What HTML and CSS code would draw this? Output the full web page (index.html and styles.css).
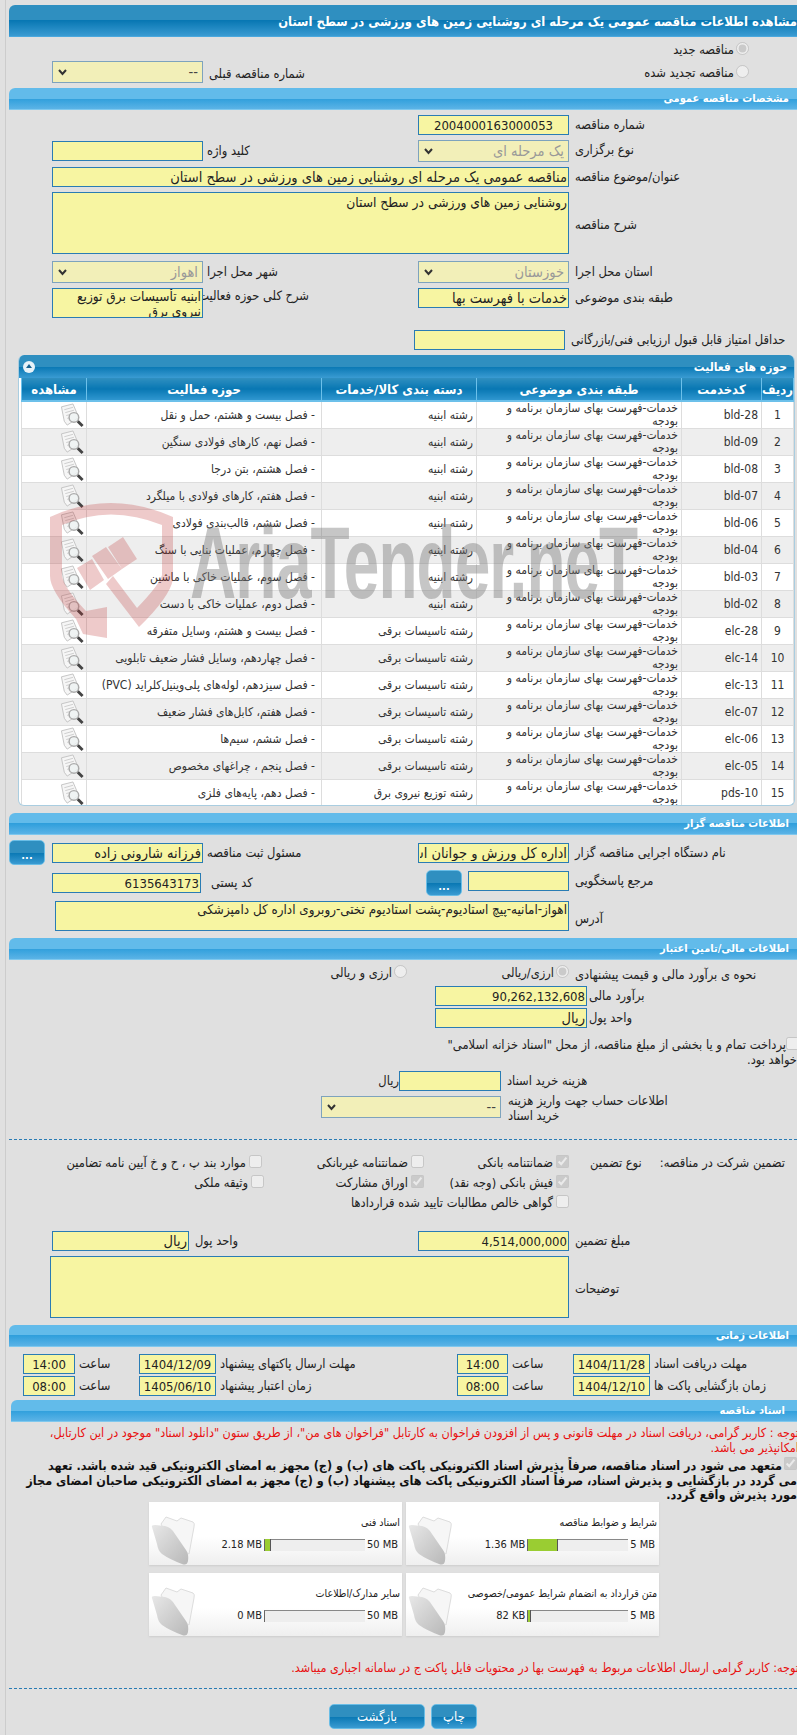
FILE: index.html
```html
<!DOCTYPE HTML>
<html lang="fa" dir="rtl">
<head>
<meta charset="UTF-8">
<title>مشاهده اطلاعات مناقصه</title>
<link rel="stylesheet" href="styles.css">
</head>
<body>
<svg class="defs" width="0" height="0">
  <defs>
    <linearGradient id="gFolder" x1="0" y1="0" x2="1" y2="1">
      <stop offset="0" stop-color="#e8e8e8"/>
      <stop offset="1" stop-color="#b8b8b8"/>
    </linearGradient>
    <symbol id="icoView" viewBox="0 0 26 26">
      <path d="M2 4 L14 1 L20 15 L8 23 L5 19 Z" fill="#f6f6f6" stroke="#c4c4c4"/>
      <path d="M5 7 L14 4.500 M6 10 L15 7.500 M7 13 L11 12 M8 16 L10 15.500" stroke="#ccc" fill="none"/>
      <circle cx="15" cy="15" r="5" fill="#eef2f2" fill-opacity=".8" stroke="#aaa" stroke-width="1.500"/>
      <path d="M19 19 L24 24" stroke="#444" stroke-width="3"/>
    </symbol>
    <symbol id="icoFolder" viewBox="0 0 44 52">
      <path d="M10 10 L15 3 L26 7 L30 4 L42 8 Q44 9 43 13 L38 40 L20 30 Z" fill="#f6f6f6" stroke="#ddd"/>
      <path d="M1 13 Q0 11 4 11 L14 12 Q20 13 24 20 L35 36 Q38 40 37 47 Q36 52 31 50 Q18 45 11 40 Q7 37 6 30 Z" fill="url(#gFolder)"/>
    </symbol>
  </defs>
</svg>

<div class="page">
  <div class="bar-main">مشاهده اطلاعات مناقصه عمومی یک مرحله ای روشنایی زمین های ورزشی در سطح استان</div>

  <div class="row h19 mt5">
    <label class="opt-right w228"><input type="radio" disabled checked><span>مناقصه جدید</span></label>
  </div>
  <div class="row h27">
    <label class="opt-right opt-second w228"><input type="radio" disabled><span>مناقصه تجدید شده</span></label>
    <div class="ctl w260"></div>
    <div class="lbl prev-lbl">شماره مناقصه قبلی</div>
    <select class="sel w151 sel-on"><option>--</option></select>
  </div>

  <div class="bar-sec">مشخصات مناقصه عمومی</div>

  <div class="row h25 mt5">
    <div class="lbl w228">شماره مناقصه</div>
    <input class="fld w151 center" type="text" value="2004000163000053">
  </div>
  <div class="row h27">
    <div class="lbl w228">نوع برگزاری</div>
    <div class="ctl w260"><select class="sel w151" disabled><option>یک مرحله ای</option></select></div>
    <div class="lbl w106 mt1">کلید واژه</div>
    <input class="fld w151 mt1" type="text">
  </div>
  <div class="row h25">
    <div class="lbl w228">عنوان/موضوع مناقصه</div>
    <input class="fld fa w517" type="text" value="مناقصه عمومی یک مرحله ای روشنایی زمین های ورزشی در سطح استان">
  </div>
  <div class="row h69">
    <div class="lbl w228 lbl-mid">شرح مناقصه</div>
    <textarea class="fld ta-big w517 ta62">روشنایی زمین های ورزشی در سطح استان</textarea>
  </div>
  <div class="row h27">
    <div class="lbl w228 mt1">استان محل اجرا</div>
    <div class="ctl w260"><select class="sel w151" disabled><option>خوزستان</option></select></div>
    <div class="lbl w106 mt1">شهر محل اجرا</div>
    <select class="sel w151" disabled><option>اهواز</option></select>
  </div>
  <div class="row h42">
    <div class="lbl w228">طبقه بندی موضوعی</div>
    <div class="ctl w260"><input class="fld fa w151" type="text" value="خدمات با فهرست بها"></div>
    <div class="lbl w106 lbl-top">شرح کلی حوزه فعالیت</div>
    <textarea class="fld ta-small w151 ta30">ابنیه تأسیسات برق توزیع
نیروی برق</textarea>
  </div>
  <div class="row h25">
    <div class="lbl w232">حداقل امتیاز قابل قبول ارزیابی فنی/بازرگانی</div>
    <input class="fld w151" type="text">
  </div>

  <div class="panel">
    <div class="panel-head">
      <span>حوزه های فعالیت</span>
      <span class="collapse"></span>
    </div>
    <table class="grid">
      <thead>
        <tr><th class="c-no">ردیف</th><th class="c-code">کدخدمت</th><th class="c-cat">طبقه بندی موضوعی</th><th class="c-group">دسته بندی کالا/خدمات</th><th class="c-act">حوزه فعالیت</th><th class="c-view">مشاهده</th></tr>
      </thead>
      <tbody>
        <tr><td class="t-no">1</td><td class="t-code">bld-28</td><td>خدمات-فهرست بهای سازمان برنامه و بودجه</td><td>رشته ابنیه</td><td>- فصل بیست و هشتم، حمل و نقل</td><td class="t-view"><svg class="ico-view"><use href="#icoView"/></svg></td></tr>
        <tr><td class="t-no">2</td><td class="t-code">bld-09</td><td>خدمات-فهرست بهای سازمان برنامه و بودجه</td><td>رشته ابنیه</td><td>- فصل نهم، کارهای فولادی سنگین</td><td class="t-view"><svg class="ico-view"><use href="#icoView"/></svg></td></tr>
        <tr><td class="t-no">3</td><td class="t-code">bld-08</td><td>خدمات-فهرست بهای سازمان برنامه و بودجه</td><td>رشته ابنیه</td><td>- فصل هشتم، بتن درجا</td><td class="t-view"><svg class="ico-view"><use href="#icoView"/></svg></td></tr>
        <tr><td class="t-no">4</td><td class="t-code">bld-07</td><td>خدمات-فهرست بهای سازمان برنامه و بودجه</td><td>رشته ابنیه</td><td>- فصل هفتم، کارهای فولادی با میلگرد</td><td class="t-view"><svg class="ico-view"><use href="#icoView"/></svg></td></tr>
        <tr><td class="t-no">5</td><td class="t-code">bld-06</td><td>خدمات-فهرست بهای سازمان برنامه و بودجه</td><td>رشته ابنیه</td><td>- فصل ششم، قالب‌بندی فولادی</td><td class="t-view"><svg class="ico-view"><use href="#icoView"/></svg></td></tr>
        <tr><td class="t-no">6</td><td class="t-code">bld-04</td><td>خدمات-فهرست بهای سازمان برنامه و بودجه</td><td>رشته ابنیه</td><td>- فصل چهارم، عملیات بنایی با سنگ</td><td class="t-view"><svg class="ico-view"><use href="#icoView"/></svg></td></tr>
        <tr><td class="t-no">7</td><td class="t-code">bld-03</td><td>خدمات-فهرست بهای سازمان برنامه و بودجه</td><td>رشته ابنیه</td><td>- فصل سوم، عملیات خاکی با ماشین</td><td class="t-view"><svg class="ico-view"><use href="#icoView"/></svg></td></tr>
        <tr><td class="t-no">8</td><td class="t-code">bld-02</td><td>خدمات-فهرست بهای سازمان برنامه و بودجه</td><td>رشته ابنیه</td><td>- فصل دوم، عملیات خاکی با دست</td><td class="t-view"><svg class="ico-view"><use href="#icoView"/></svg></td></tr>
        <tr><td class="t-no">9</td><td class="t-code">elc-28</td><td>خدمات-فهرست بهای سازمان برنامه و بودجه</td><td>رشته تاسیسات برقی</td><td>- فصل بیست و هشتم، وسایل متفرقه</td><td class="t-view"><svg class="ico-view"><use href="#icoView"/></svg></td></tr>
        <tr><td class="t-no">10</td><td class="t-code">elc-14</td><td>خدمات-فهرست بهای سازمان برنامه و بودجه</td><td>رشته تاسیسات برقی</td><td>- فصل چهاردهم، وسایل فشار ضعیف تابلویی</td><td class="t-view"><svg class="ico-view"><use href="#icoView"/></svg></td></tr>
        <tr><td class="t-no">11</td><td class="t-code">elc-13</td><td>خدمات-فهرست بهای سازمان برنامه و بودجه</td><td>رشته تاسیسات برقی</td><td>- فصل سیزدهم، لوله‌های پلی‌وینیل‌کلراید (PVC)</td><td class="t-view"><svg class="ico-view"><use href="#icoView"/></svg></td></tr>
        <tr><td class="t-no">12</td><td class="t-code">elc-07</td><td>خدمات-فهرست بهای سازمان برنامه و بودجه</td><td>رشته تاسیسات برقی</td><td>- فصل هفتم، کابل‌های فشار ضعیف</td><td class="t-view"><svg class="ico-view"><use href="#icoView"/></svg></td></tr>
        <tr><td class="t-no">13</td><td class="t-code">elc-06</td><td>خدمات-فهرست بهای سازمان برنامه و بودجه</td><td>رشته تاسیسات برقی</td><td>- فصل ششم، سیم‌ها</td><td class="t-view"><svg class="ico-view"><use href="#icoView"/></svg></td></tr>
        <tr><td class="t-no">14</td><td class="t-code">elc-05</td><td>خدمات-فهرست بهای سازمان برنامه و بودجه</td><td>رشته تاسیسات برقی</td><td>- فصل پنجم ، چراغهای مخصوص</td><td class="t-view"><svg class="ico-view"><use href="#icoView"/></svg></td></tr>
        <tr><td class="t-no">15</td><td class="t-code">pds-10</td><td>خدمات-فهرست بهای سازمان برنامه و بودجه</td><td>رشته توزیع نیروی برق</td><td>- فصل دهم، پایه‌های فلزی</td><td class="t-view"><svg class="ico-view"><use href="#icoView"/></svg></td></tr>
      </tbody>
    </table>
  </div>

  <div class="bar-sec mt7">اطلاعات مناقصه گزار</div>

  <div class="row h30 mt5">
    <div class="lbl w228 mt3">نام دستگاه اجرایی مناقصه گزار</div>
    <div class="ctl w260 mt3"><input class="fld fa w151" type="text" value="اداره کل ورزش و جوانان استان خوزستان"></div>
    <div class="lbl w106 mt3">مسئول ثبت مناقصه</div>
    <input class="fld fa w151 mt3" type="text" value="فرزانه شارونی زاده">
    <button class="btn btn-more" type="button">...</button>
  </div>
  <div class="row h31">
    <div class="lbl w228 mt1">مرجع پاسخگویی</div>
    <input class="fld w101 mt1" type="text">
    <button class="btn btn-ref" type="button">...</button>
    <div class="lbl w225 mt3 postal">کد پستی</div>
    <input class="fld w149 mt3" type="text" value="6135643173">
  </div>
  <div class="row h37">
    <div class="lbl w228 lbl-addr">آدرس</div>
    <textarea class="fld ta-addr w514 ta30">اهواز-امانیه-پیچ استادیوم-پشت استادیوم تختی-روبروی اداره کل دامپزشکی</textarea>
  </div>

  <div class="bar-sec">اطلاعات مالی/تامین اعتبار</div>

  <div class="row h21 mt5">
    <div class="lbl w228 pr32">نحوه ی برآورد مالی و قیمت پیشنهادی</div>
    <label class="opt w162"><input type="radio" disabled checked><span>ارزی/ریالی</span></label>
    <label class="opt"><input type="radio" disabled><span>ارزی و ریالی</span></label>
  </div>
  <div class="row h22">
    <div class="lbl w210 pl2">برآورد مالی</div>
    <input class="fld w152" type="text" value="90,262,132,608">
  </div>
  <div class="row h27">
    <div class="lbl w210 pl2">واحد پول</div>
    <input class="fld fa w152" type="text" value="ریال">
  </div>
  <p class="treasury"><input type="checkbox" disabled>پرداخت تمام و یا بخشی از مبلغ مناقصه، از محل "اسناد خزانه اسلامی"<br>خواهد بود.</p>
  <div class="row h25 mt6">
    <div class="lbl w296">هزینه خرید اسناد</div>
    <input class="fld w102" type="text">
    <div class="lbl-unit">ریال</div>
  </div>
  <div class="row h31">
    <div class="lbl w296 lbl-wrap">اطلاعات حساب جهت واریز هزینه<br>خرید اسناد</div>
    <select class="sel w180 sel-on"><option>--</option></select>
  </div>
  <div class="dash"></div>

  <div class="row h20 mt15">
    <div class="g-title">تضمین شرکت در مناقصه:</div>
    <div class="g-type">نوع تضمین</div>
    <label class="chk w145"><input type="checkbox" disabled checked><span>ضمانتنامه بانکی</span></label>
    <label class="chk w162"><input type="checkbox" disabled><span>ضمانتنامه غیربانکی</span></label>
    <label class="chk"><input type="checkbox" disabled><span>موارد بند پ ، ح و خ آیین نامه تضامین</span></label>
  </div>
  <div class="row h20 g-row">
    <label class="chk w145"><input type="checkbox" disabled checked><span>فیش بانکی (وجه نقد)</span></label>
    <label class="chk w160"><input type="checkbox" disabled checked><span>اوراق مشارکت</span></label>
    <label class="chk"><input type="checkbox" disabled><span>وثیقه ملکی</span></label>
  </div>
  <div class="row h26 g-row">
    <label class="chk"><input type="checkbox" disabled><span>گواهی خالص مطالبات تایید شده قراردادها</span></label>
  </div>

  <div class="row h25 amount">
    <div class="lbl w228">مبلغ تضمین</div>
    <div class="ctl w260"><input class="fld w151" type="text" value="4,514,000,000"></div>
    <div class="lbl w120">واحد پول</div>
    <input class="fld fa w137" type="text" value="ریال">
  </div>
  <div class="row h69">
    <div class="lbl w228 lbl-mid">توضیحات</div>
    <textarea class="fld w519 ta62"></textarea>
  </div>

  <div class="bar-sec">اطلاعات زمانی</div>

  <div class="row h22 mt7">
    <div class="lbl w147">مهلت دریافت اسناد</div>
    <input class="fld w77 center" type="text" value="1404/11/28">
    <div class="lbl w65">ساعت</div>
    <input class="fld w51 center" type="text" value="14:00">
    <div class="lbl w241">مهلت ارسال پاکتهای پیشنهاد</div>
    <input class="fld w77 center" type="text" value="1404/12/09">
    <div class="lbl w64">ساعت</div>
    <input class="fld w52 center" type="text" value="14:00">
  </div>
  <div class="row h24">
    <div class="lbl w147">زمان بازگشایی پاکت ها</div>
    <input class="fld w77 center" type="text" value="1404/12/10">
    <div class="lbl w65">ساعت</div>
    <input class="fld w51 center" type="text" value="08:00">
    <div class="lbl w241">زمان اعتبار پیشنهاد</div>
    <input class="fld w77 center" type="text" value="1405/06/10">
    <div class="lbl w64">ساعت</div>
    <input class="fld w52 center" type="text" value="08:00">
  </div>

  <div class="bar-sec bar-docs">اسناد مناقصه</div>

  <p class="note-red">توجه : کاربر گرامی، دریافت اسناد در مهلت قانونی و پس از افزودن فراخوان به کارتابل "فراخوان های من"، از طریق ستون "دانلود اسناد" موجود در این کارتابل، امکانپذیر می باشد.</p>
  <p class="pledge"><input type="checkbox" disabled checked>متعهد می شود در اسناد مناقصه، صرفاً پذیرش اسناد الکترونیکی پاکت های (ب) و (ج) مجهز به امضای الکترونیکی قید شده باشد. تعهد<br>می گردد در بازگشایی و پذیرش اسناد، صرفاً اسناد الکترونیکی پاکت های پیشنهاد (ب) و (ج) مجهز به امضای الکترونیکی صاحبان امضای مجاز<br>مورد پذیرش واقع گردد.</p>

  <div class="cards">
    <div class="card">
      <div class="card-body">
        <div class="card-title">شرایط و ضوابط مناقصه</div>
        <div class="meter"><span>5 MB</span><div class="track"><div class="fill f30"></div></div><span>1.36 MB</span></div>
      </div>
      <svg class="ico-folder"><use href="#icoFolder"/></svg>
    </div>
    <div class="card">
      <div class="card-body">
        <div class="card-title">اسناد فنی</div>
        <div class="meter"><span>50 MB</span><div class="track"><div class="fill f6"></div></div><span>2.18 MB</span></div>
      </div>
      <svg class="ico-folder"><use href="#icoFolder"/></svg>
    </div>
    <div class="card">
      <div class="card-body">
        <div class="card-title">متن قرارداد به انضمام شرایط عمومی/خصوصی</div>
        <div class="meter"><span>5 MB</span><div class="track"><div class="fill f3"></div></div><span>82 KB</span></div>
      </div>
      <svg class="ico-folder"><use href="#icoFolder"/></svg>
    </div>
    <div class="card">
      <div class="card-body">
        <div class="card-title">سایر مدارک/اطلاعات</div>
        <div class="meter"><span>50 MB</span><div class="track"><div class="fill f0"></div></div><span>0 MB</span></div>
      </div>
      <svg class="ico-folder"><use href="#icoFolder"/></svg>
    </div>
  </div>

  <p class="note-red note-last">توجه: کاربر گرامی ارسال اطلاعات مربوط به فهرست بها در محتویات فایل پاکت ج در سامانه اجباری میباشد.</p>
  <div class="dash dash-end"></div>

  <div class="actions">
    <button class="btn btn-print" type="button">چاپ</button>
    <button class="btn btn-back" type="button">بازگشت</button>
  </div>
</div>

<!-- watermark lies over the table -->
<div class="mark">
  <svg class="mark-logo" viewBox="0 0 140 160">
    <path d="M3 22 Q63 -6 126 22 L126 84 Q123 102 92 132 L59 89 L66 81 L90 113 Q113 89 115 80 L115 30 Q63 9 15 30 L15 81 Q17 93 39 116 L60 112 L60 143 L36 139 L29 124 Q3 96 3 81 Z"/>
    <path d="M30 73 L45 64 L57 85 L43 95 Z M45 61 L59 52 L75 74 L61 84 Z M61 52 L76 42 L90 64 L75 74 Z"/>
  </svg>
  <div class="mark-text" dir="ltr">AriaTender.neT</div>
</div>
</body>
</html>
```

FILE: styles.css
```css
html, body {
  margin: 0;
  padding: 0;
  background: #e0e0e0;
}

body {
  position: relative;
  height: 1735px;
  overflow: hidden;
  font-family: "DejaVu Sans Condensed", "DejaVu Sans", sans-serif;
  font-size: 12.800px;
  color: #222;
}

.defs { position: absolute; }

.page {
  margin-left: 5px;
  border-left: 1px solid #ccc;
  padding: 5px 0 0 3px;
  height: 1730px;
}

/* header bars */
.bar-main, .panel-head, .btn {
  background: linear-gradient(#2f8fc0 0, #2f8fc0 50%, #0877b3 50%, #3a9bd2 100%);
  color: #fff;
}

.bar-main {
  height: 32px;
  line-height: 34px;
  font-weight: bold;
  font-size: 12.900px;
  white-space: nowrap;
  border-top-left-radius: 6px;
  border-bottom: 1px solid #4aa8de;
  box-sizing: border-box;
}

.bar-sec {
  height: 22px;
  line-height: 22px;
  padding-right: 8px;
  font-weight: bold;
  font-size: 11px;
  color: #fff;
  box-sizing: border-box;
  border-top-left-radius: 6px;
  background: linear-gradient(#62bbea 0, #62bbea 50%, #2f9fdc 50%, #5bb3e6 100%);
  border-bottom: 1px solid #7fc8ee;
}

.bar-docs { margin-left: 2px; padding-right: 12px; }

/* rows */
.row { display: flex; align-items: flex-start; }
.h19 { height: 19px; }
.h20 { height: 20px; }
.h21 { height: 21px; }
.h22 { height: 22px; }
.h24 { height: 24px; }
.h25 { height: 25px; }
.h26 { height: 26px; }
.h27 { height: 27px; }
.h30 { height: 30px; }
.h31 { height: 31px; }
.h37 { height: 37px; }
.h42 { height: 42px; }
.h69 { height: 69px; }
.mt1 { margin-top: 1px; }
.mt3 { margin-top: 3px; }
.mt5 { margin-top: 5px; }
.mt6 { margin-top: 6px; }
.mt7 { margin-top: 7px; }
.mt15 { margin-top: 15px; }

.w51 { width: 51px; }
.w52 { width: 52px; }
.w64 { width: 64px; }
.w65 { width: 65px; }
.w77 { width: 77px; }
.w101 { width: 101px; }
.w102 { width: 102px; }
.w106 { width: 106px; }
.w120 { width: 120px; }
.w137 { width: 137px; }
.w145 { width: 145px; }
.w147 { width: 147px; }
.w149 { width: 149px; }
.w151 { width: 151px; }
.w152 { width: 152px; }
.w160 { width: 160px; }
.w162 { width: 162px; }
.w180 { width: 180px; }
.w210 { width: 210px; }
.w225 { width: 225px; }
.w228 { width: 228px; }
.w232 { width: 232px; }
.w241 { width: 241px; }
.w260 { width: 260px; }
.w296 { width: 296px; }
.w514 { width: 514px; }
.w517 { width: 517px; }
.w519 { width: 519px; }

.ctl { flex: none; }

.lbl {
  flex: none;
  box-sizing: border-box;
  text-align: left;
  padding-left: 6px;
  line-height: 20px;
  white-space: nowrap;
}
.w106.lbl, .w241.lbl, .w64.lbl, .w65.lbl, .w147.lbl { padding-left: 4px; }
.lbl.pl2 { padding-left: 2px; }
.pr32 { padding-right: 32px; }
.lbl-mid { padding-top: 23px; }
.lbl-top { margin-top: -2px; }
.lbl-addr { padding-top: 8px; }
.lbl.lbl-wrap { line-height: 15px; padding-left: 7px; margin-top: -3px; }
.lbl.postal { padding-left: 10px; }
.lbl.prev-lbl { width: 106px; padding-left: 6px; margin-top: 3px; }

.lbl-unit { line-height: 20px; }

/* form controls */
.fld {
  display: block;
  flex: none;
  box-sizing: border-box;
  height: 20px;
  margin: 0;
  padding: 0 1px;
  background: #f7f5a2;
  border: 1px solid #2a7cb4;
  font-family: inherit;
  font-size: 13px;
  color: #222;
  border-radius: 0;
  outline: none;
  resize: none;
  overflow: hidden;
}
.fld.mt1 { margin-top: 1px; }
.fld.mt3 { margin-top: 3px; }
.center { text-align: center; }
.fa { font-size: 14.500px; }
textarea.fld { line-height: 15px; }
.ta-big { font-size: 13.700px; padding-top: 2px; }
.ta-small { font-size: 13.500px; line-height: 14px; }
.ta-addr { font-size: 13.300px; }
.ta62 { height: 62px; }
.ta30 { height: 30px; }

.sel {
  display: block;
  flex: none;
  box-sizing: border-box;
  height: 22px;
  margin: 0;
  padding: 0 4px 0 14px;
  appearance: none;
  background-color: #f2efb8;
  background-image: url("data:image/svg+xml,%3Csvg xmlns='http://www.w3.org/2000/svg' width='9' height='7'%3E%3Cpath d='M1 1 L4.500 5 L8 1' fill='none' stroke='%23333' stroke-width='2'/%3E%3C/svg%3E");
  background-repeat: no-repeat;
  background-position: left 5px center;
  border: 1px solid #7ea3bd;
  font-family: inherit;
  font-size: 14.500px;
  color: #999;
  border-radius: 0;
  opacity: 1;
}
.sel-on { color: #444; }

.opt, .opt-right, .chk {
  display: flex;
  align-items: flex-start;
  flex: none;
  white-space: nowrap;
  line-height: 20px;
}
.opt-right { box-sizing: border-box; padding-right: 48px; }
input[type="radio"], input[type="checkbox"] {
  width: 13px;
  height: 13px;
  margin: 0 0 0 2px;
  flex: none;
}
.opt-right span { margin-top: -2px; }
.opt-second input { margin-top: 4px; }
.opt-second span { margin-top: 2px; }
.opt span { margin-top: -2px; }

.chk input { margin: 0 0 0 3px; }
.chk span { margin-top: -2px; }

/* activity panel */
.panel {
  margin-left: 9px;
  margin-right: 2px;
  background: #fff;
  border-radius: 6px;
  border: 1px solid #a9cde0;
  border-top: 0;
  box-sizing: border-box;
  height: 451px;
  overflow: hidden;
}

.panel-head {
  display: flex;
  justify-content: space-between;
  align-items: center;
  height: 23px;
  padding: 0 7px 0 4px;
  font-weight: bold;
  font-size: 12px;
}

.collapse {
  position: relative;
  width: 12px;
  height: 12px;
  border-radius: 50%;
  background: #e8f2f8;
}
.collapse::after {
  content: "";
  position: absolute;
  left: 3px;
  top: 3px;
  border: 3px solid transparent;
  border-top: 0;
  border-bottom: 4px solid #17618f;
}

.grid {
  table-layout: fixed;
  width: 772px;
  margin: 0;
  border-collapse: collapse;
  font-size: 12px;
}

.grid th {
  box-sizing: border-box;
  height: 23px;
  padding: 0;
  font-size: 13px;
  color: #fff;
  background: linear-gradient(#2f8fc0 0, #0877b3 50%, #0877b3 50%, #2f96cf 100%);
  border-left: 1px solid #6cc0ea;
  border-right: 1px solid #6cc0ea;
  border-bottom: 2px solid #6cc0ea;
}
.grid .c-no { width: 32px; }
.grid .c-code { width: 80px; }
.grid .c-cat { width: 205px; }
.grid .c-group { width: 155px; }
.grid .c-act { width: 235px; }
.grid .c-view { width: 65px; }

.grid td {
  height: 27px;
  padding: 0 3px;
  line-height: 13px;
  color: #333;
  overflow: hidden;
  border-left: 1px solid #ddd;
  border-right: 1px solid #ddd;
  border-bottom: 1px solid #ddd;
  box-sizing: border-box;
  text-align: right;
}
.grid tbody tr:nth-child(even) td { background: #eee; }
.grid td:nth-child(5) { padding-right: 6px; }
.grid .t-no { text-align: center; }
.grid .t-code { direction: ltr; text-align: right; }
.grid .t-view { padding: 0 0 0 1px; }
.ico-view { display: block; width: 26px; height: 25px; margin-right: 1px; }

/* buttons */
.btn {
  flex: none;
  box-sizing: border-box;
  border: 1px solid #69bde6;
  border-radius: 5px;
  font-family: inherit;
  font-size: 13px;
  padding: 0;
}
.btn-more { width: 36px; height: 25px; margin-right: 7px; font-weight: bold; font-size: 11px; padding-top: 6px; }
.btn-ref { width: 36px; height: 26px; margin-right: 6px; font-weight: bold; font-size: 11px; padding-top: 6px; }

/* finance */
.treasury {
  margin: 1px 0 0;
  height: 28px;
  padding-top: 1px;
  line-height: 15px;
  white-space: nowrap;
}
.treasury input { margin: 0 -2px 0 0; vertical-align: top; }

.dash { border-top: 1px dashed #2a7cb4; height: 0; margin-top: 12px; }
.dash-end { margin-top: 13px; }

.g-title { width: 139px; box-sizing: border-box; padding-right: 12px; line-height: 16px; flex: none; }
.g-type { width: 89px; box-sizing: border-box; padding-left: 21px; text-align: left; line-height: 16px; flex: none; }
.g-row { padding-right: 228px; }
.amount { margin-top: 10px; }

/* docs */
.note-red {
  margin: 3px -2px 0 0;
  color: #e81010;
  line-height: 15px;
  font-size: 12.500px;
  padding-left: 4px;
}
.pledge {
  margin: 0;
  padding-top: 2px;
  line-height: 14.500px;
  font-weight: bold;
  font-size: 12.500px;
  color: #111;
  height: 45px;
  white-space: nowrap;
}
.pledge input { margin: 0 0 0 2px; }

.cards {
  display: grid;
  grid-template-columns: 253px 253px;
  gap: 8px 4px;
  width: 510px;
  margin: 0 138px 0 0;
}

.card {
  display: flex;
  justify-content: space-between;
  height: 63px;
  padding: 0 2px;
  box-sizing: border-box;
  background: linear-gradient(#fff 0, #fff 55%, #efefef 100%);
  box-shadow: 0 1px 2px #ccc;
  font-size: 11px;
}

.card-title { margin-top: 13px; height: 24px; line-height: 14px; white-space: nowrap; font-size: 10.600px; }

.meter { display: flex; align-items: center; gap: 2px; line-height: 12px; font-size: 11px; margin-right: 2px; }
.meter span { direction: ltr; unicode-bidi: isolate; }

.track {
  width: 101px;
  height: 12px;
  background: #eee;
  border-top: 1px solid #888;
  border-left: 1px solid #666;
  box-sizing: border-box;
  display: flex;
  direction: ltr;
}

.fill { background: #9acd32; height: 12px; border-right: 1px solid #555; margin-top: -1px; }
.f30 { width: 29px; }
.f6 { width: 5px; }
.f3 { width: 2px; }
.f0 { width: 0; border-right: 0; }

.ico-folder { display: block; width: 44px; height: 52px; margin-top: 12px; flex: none; }

.note-last { margin-top: 24px; padding: 0; white-space: nowrap; }

.actions { display: flex; justify-content: flex-start; gap: 6px; padding: 15px 320px 0 0; }
.btn-print { width: 46px; height: 25px; }
.btn-back { width: 96px; height: 25px; }

/* watermark */
.mark {
  position: absolute;
  left: 47px;
  top: 495px;
  width: 620px;
  height: 160px;
  pointer-events: none;
}
.mark-logo {
  position: absolute;
  left: 0;
  top: 0;
  width: 140px;
  height: 160px;
  fill: rgba(190, 50, 50, .26);
}
.mark-text {
  position: absolute;
  left: 143px;
  top: 17px;
  font-family: "Liberation Sans", sans-serif;
  font-weight: bold;
  font-size: 64px;
  line-height: 65px;
  letter-spacing: -1px;
  color: rgba(120, 120, 120, .42);
  white-space: nowrap;
  transform: scaleY(1.600);
  transform-origin: left top;
}
```
